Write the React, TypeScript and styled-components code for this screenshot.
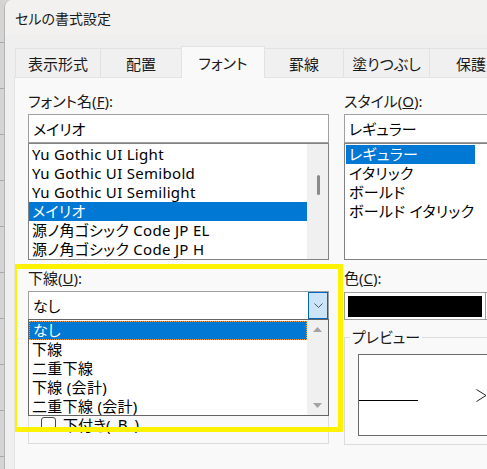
import React from 'react';
import styled, { createGlobalStyle } from 'styled-components';

const GlobalStyle = createGlobalStyle`
  html, body {
    margin: 0;
    padding: 0;
    background: #d6d6d6;
  }
  body {
    font-family: "Noto Sans", "Noto Sans CJK JP", sans-serif;
    font-feature-settings: "palt";
    color: #000;
    overflow: hidden;
  }
`;

const Screen = styled.div`
  display: flex;
  width: 487px;
  height: 469px;
  overflow: hidden;
`;

const SheetStrip = styled.div`
  width: 4px;
  flex-shrink: 0;
  background-color: #d4d4d4;
  background-image: repeating-linear-gradient(
    to bottom,
    transparent 0 42px,
    #a8a8a8 42px 43px,
    transparent 43px 46px
  );
`;

const Dialog = styled.div`
  flex: 1;
  display: flex;
  flex-direction: column;
  background: #efefef;
  border-left: 1px solid #b4b4b4;
  border-top-left-radius: 8px;
  overflow: hidden;
`;

const TitleBar = styled.div`
  height: 35px;
  flex-shrink: 0;
  display: flex;
  align-items: center;
  padding-left: 10px;
  background: #f3f1ef;
  font-size: 14px;
  color: #1a1a1a;
`;

const Body = styled.div`
  flex: 1;
  display: flex;
  flex-direction: column;
  padding: 11px 0 0 9px;
  min-height: 0;
`;

const TabRow = styled.div`
  display: flex;
  align-items: flex-end;
  margin-left: 1px;
  position: relative;
  z-index: 1;
`;

const Tab = styled.div<{ $width: number; $active?: boolean }>`
  width: ${({ $width }) => $width}px;
  flex-shrink: 0;
  box-sizing: border-box;
  height: ${({ $active }) => ($active ? 32 : 29)}px;
  margin-right: -1px;
  margin-bottom: ${({ $active }) => ($active ? -1 : 0)}px;
  border: 1px solid #e2e2e2;
  border-bottom: none;
  background: ${({ $active }) => ($active ? '#f9f9f9' : '#f0f0f0')};
  position: relative;
  z-index: ${({ $active }) => ($active ? 2 : 1)};
  display: flex;
  align-items: center;
  justify-content: center;
  font-size: 15px;
  color: #1b1b1b;
`;

const Panel = styled.div`
  flex: 1;
  position: relative;
  display: flex;
  gap: 15px;
  padding: 14px 0 0 13px;
  background: #f9f9f9;
  border-top: 1px solid #e3e3e3;
  border-left: 1px solid #e3e3e3;
  overflow: hidden;
`;

const Column = styled.div<{ $width: number }>`
  width: ${({ $width }) => $width}px;
  flex-shrink: 0;
  display: flex;
  flex-direction: column;
`;

const FieldLabel = styled.div<{ $gap?: number }>`
  height: 18px;
  line-height: 18px;
  margin-top: ${({ $gap }) => $gap ?? 0}px;
  margin-bottom: 4px;
  font-size: 15px;
  color: #1a1a1a;
  white-space: nowrap;
`;

const TextBox = styled.div`
  height: 29px;
  box-sizing: border-box;
  border: 1px solid #a0a0a0;
  background: #fff;
  display: flex;
  align-items: center;
  padding-left: 4px;
  font-size: 15px;
  white-space: nowrap;
`;

const ListBox = styled.div`
  height: 117px;
  box-sizing: border-box;
  border: 1px solid #828282;
  background: #fff;
  display: flex;
`;

const ListItems = styled.div<{ $inset?: boolean }>`
  flex: 1;
  display: flex;
  flex-direction: column;
  padding: 1px 0 0 ${({ $inset }) => ($inset ? 1 : 0)}px;
  min-width: 0;
`;

const ListItem = styled.div<{ $selected?: boolean; $focus?: boolean; $width?: number }>`
  height: 19px;
  flex-shrink: 0;
  box-sizing: border-box;
  width: ${({ $width }) => ($width ? `${$width}px` : 'auto')};
  padding-left: 3px;
  font-size: 15px;
  letter-spacing: 0.3px;
  white-space: nowrap;
  overflow: hidden;
  background: ${({ $selected }) => ($selected ? '#0078d4' : 'transparent')};
  color: ${({ $selected }) => ($selected ? '#fff' : '#000')};
  border: ${({ $focus }) => ($focus ? '1px dotted #f0a050' : 'none')};
  line-height: ${({ $focus }) => ($focus ? 17 : 19)}px;
`;

const ScrollTrack = styled.div<{ $ends?: boolean }>`
  width: 21px;
  flex-shrink: 0;
  background: #f0f0f0;
  display: flex;
  flex-direction: column;
  align-items: center;
  justify-content: ${({ $ends }) => ($ends ? 'space-between' : 'flex-start')};
  padding: ${({ $ends }) => ($ends ? '7px 0' : '0')};
  box-sizing: border-box;
`;

const Thumb = styled.div`
  width: 3px;
  height: 20px;
  margin: 31px 0 0 1px;
  border-radius: 2px;
  background: #8a8a8a;
`;

const ComboWrap = styled.div`
  position: relative;
  height: 29px;
  box-sizing: border-box;
  border: 1px solid #a0a0a0;
  background: #fff;
  display: flex;
  align-items: center;
  padding-left: 4px;
  font-size: 15px;
`;

const ComboButton = styled.div`
  margin-left: auto;
  width: 20px;
  height: 27px;
  box-sizing: border-box;
  border: 1px solid #0067c0;
  background: #cce4f7;
  display: flex;
  align-items: center;
  justify-content: center;
`;

const DropList = styled.div`
  position: absolute;
  top: 100%;
  left: -1px;
  width: 301px;
  height: 97px;
  box-sizing: border-box;
  border: 1px solid #646464;
  background: #fff;
  display: flex;
  z-index: 2;
`;

const Group = styled.fieldset<{ $height: number; $gap: number; $pad: string }>`
  margin: ${({ $gap }) => $gap}px 0 0 0;
  padding: ${({ $pad }) => $pad};
  height: ${({ $height }) => $height}px;
  box-sizing: border-box;
  border: 1px solid #dcdcdc;
  min-width: 0;
`;

const GroupLegend = styled.legend`
  padding: 0 2px;
  margin-left: -8px;
  line-height: 18px;
  font-size: 15px;
  color: #1a1a1a;
`;

const CheckRow = styled.div`
  height: 24px;
  display: flex;
  align-items: center;
  gap: 7px;
  padding-left: 12px;
  font-size: 15px;
`;

const CheckBox = styled.span`
  width: 15px;
  height: 15px;
  box-sizing: border-box;
  border: 1px solid #4a4a4a;
  border-radius: 3px;
  background: #fff;
`;

const ColorCombo = styled.div`
  height: 28px;
  margin-top: 1px;
  box-sizing: border-box;
  border: 1px solid #a0a0a0;
  background: #fff;
  display: flex;
  align-items: center;
  padding-left: 3px;
`;

const Swatch = styled.div`
  width: 134px;
  height: 21px;
  background: #000;
`;

const ColorButton = styled.div`
  margin-left: 3px;
  align-self: stretch;
  width: 20px;
  border-left: 1px solid #a0a0a0;
`;

const PreviewBox = styled.div`
  width: 200px;
  height: 82px;
  box-sizing: border-box;
  border: 1px solid #6a6a6a;
  background: #fff;
  display: flex;
  align-items: flex-start;
`;

const PreviewLine = styled.div`
  width: 59px;
  height: 1px;
  margin-top: 45px;
  background: #000;
`;

const PreviewGlyph = styled.svg`
  margin-left: 58px;
  margin-top: 34px;
  flex-shrink: 0;
`;

const Highlight = styled.div`
  position: absolute;
  left: -3px;
  top: 186px;
  width: 331px;
  height: 168px;
  box-sizing: border-box;
  border: 5px solid #fff200;
  pointer-events: none;
  z-index: 3;
`;

const tabs = [
  { label: '表示形式', width: 86 },
  { label: '配置', width: 82 },
  { label: 'フォント', width: 84, active: true },
  { label: '罫線', width: 80 },
  { label: '塗りつぶし', width: 87 },
  { label: '保護', width: 84 },
];

const fonts = [
  'Yu Gothic UI Light',
  'Yu Gothic UI Semibold',
  'Yu Gothic UI Semilight',
  'メイリオ',
  '源ノ角ゴシック Code JP EL',
  '源ノ角ゴシック Code JP H',
];

const styles = ['レギュラー', 'イタリック', 'ボールド', 'ボールド イタリック'];

const underlines = ['なし', '下線', '二重下線', '下線 (会計)', '二重下線 (会計)'];

const Triangle = ({ up }: { up?: boolean }) => (
  <svg width="9" height="5" viewBox="0 0 9 5">
    <polygon points={up ? '0,5 4.5,0 9,5' : '0,0 9,0 4.5,5'} fill="#a3a3a3" />
  </svg>
);

const App: React.FC = () => (
  <>
    <GlobalStyle />
    <Screen>
      <SheetStrip />
      <Dialog>
        <TitleBar>セルの書式設定</TitleBar>
        <Body>
          <TabRow>
            {tabs.map((t) => (
              <Tab key={t.label} $width={t.width} $active={t.active}>
                {t.label}
              </Tab>
            ))}
          </TabRow>
          <Panel>
            <Column $width={301}>
              <FieldLabel>
                フォント名(<u>F</u>):
              </FieldLabel>
              <TextBox>メイリオ</TextBox>
              <ListBox>
                <ListItems>
                  {fonts.map((f) => (
                    <ListItem key={f} $selected={f === 'メイリオ'}>
                      {f}
                    </ListItem>
                  ))}
                </ListItems>
                <ScrollTrack>
                  <Thumb />
                </ScrollTrack>
              </ListBox>

              <FieldLabel $gap={9}>
                下線(<u>U</u>):
              </FieldLabel>
              <ComboWrap>
                なし
                <ComboButton>
                  <svg width="9" height="5" viewBox="0 0 9 5">
                    <polyline points="0.5,0.5 4.5,4.5 8.5,0.5" fill="none" stroke="#555" strokeWidth="1" />
                  </svg>
                </ComboButton>
                <DropList>
                  <ListItems>
                    {underlines.map((u, i) => (
                      <ListItem key={u} $selected={i === 0} $focus={i === 0}>
                        {u}
                      </ListItem>
                    ))}
                  </ListItems>
                  <ScrollTrack $ends>
                    <Triangle up />
                    <Triangle />
                  </ScrollTrack>
                </DropList>
              </ComboWrap>

              <Group $gap={10} $height={114} $pad="81px 0 7px 0">
                <CheckRow>
                  <CheckBox />
                  下付き(<u>B</u>)
                </CheckRow>
              </Group>
            </Column>

            <Column $width={180}>
              <FieldLabel>
                スタイル(<u>O</u>):
              </FieldLabel>
              <TextBox>レギュラー</TextBox>
              <ListBox>
                <ListItems $inset>
                  {styles.map((s, i) => (
                    <ListItem key={s} $selected={i === 0} $width={129}>
                      {s}
                    </ListItem>
                  ))}
                </ListItems>
              </ListBox>

              <FieldLabel $gap={9}>
                色(<u>C</u>):
              </FieldLabel>
              <ColorCombo>
                <Swatch />
                <ColorButton />
              </ColorCombo>

              <Group $gap={8} $height={117} $pad="8px 0 0 13px">
                <GroupLegend>プレビュー</GroupLegend>
                <PreviewBox>
                  <PreviewLine />
                  <PreviewGlyph width="11" height="13" viewBox="0 0 11 13">
                    <polyline points="0.5,0.5 10,6.5 0.5,12.5" fill="none" stroke="#222" strokeWidth="1" />
                  </PreviewGlyph>
                </PreviewBox>
              </Group>
            </Column>
            <Highlight />
          </Panel>
        </Body>
      </Dialog>
    </Screen>
  </>
);

export default App;
